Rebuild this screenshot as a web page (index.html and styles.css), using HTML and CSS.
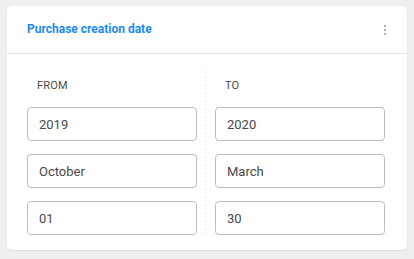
FILE: index.html
```html
<!DOCTYPE html>
<html>
<head>
<meta charset="utf-8">
<link rel="stylesheet" href="styles.css">
</head>
<body>
<div class="card">
  <div class="card-header">
    <span class="title">Purchase creation date</span>
    <span class="kebab"><i></i><i></i><i></i></span>
  </div>
  <div class="card-body">
    <div class="col col-from">
      <div class="label">FROM</div>
      <div class="field">2019</div>
      <div class="field">October</div>
      <div class="field">01</div>
    </div>
    <div class="col col-to">
      <div class="label">TO</div>
      <div class="field">2020</div>
      <div class="field">March</div>
      <div class="field">30</div>
    </div>
  </div>
</div>
</body>
</html>
```
FILE: styles.css
```css
* { box-sizing: border-box; }
html, body { margin: 0; }
body {
  background: #efefef;
  padding: 6px 7px;
  font-family: Roboto, "Liberation Sans", sans-serif;
  width: 414px;
  height: 259px;
}
.card {
  width: 400px;
  height: 244px;
  background: #fff;
  border-radius: 5px;
  box-shadow: 0 1px 2px rgba(0,0,0,0.08);
  display: flex;
  flex-direction: column;
}
.card-header {
  height: 48px;
  border-bottom: 1px solid #e2e2e2;
  display: flex;
  align-items: center;
  justify-content: space-between;
  padding: 0 20px 0 20px;
}
.title {
  color: #1a8af5;
  font-weight: 700;
  font-size: 12px;
  margin-top: -1px;
}
.kebab {
  display: flex;
  flex-direction: column;
  gap: 2px;
  margin-right: 1px;
  margin-top: 1px;
}
.kebab i {
  display: block;
  width: 2px;
  height: 2px;
  background: #b0b0b0;
}
.card-body {
  display: flex;
  padding: 14px 0 0 20px;
}
.col {
  display: flex;
  flex-direction: column;
  gap: 13px;
  padding-top: 10px;
}
.col-from {
  width: 179px;
  padding-right: 9px;
  background-image: linear-gradient(#dcdcdc 1px, transparent 1px);
  background-size: 1px 4px;
  background-repeat: repeat-y;
  background-position: right top;
}
.col-to {
  padding-left: 9px;
}
.label {
  height: 16px;
  line-height: 16px;
  font-size: 11px;
  color: #4a4a4a;
  padding-left: 10px;
  letter-spacing: 0.2px;
}
.field {
  width: 170px;
  height: 34px;
  border: 1px solid #bdbdbd;
  border-radius: 4px;
  padding-left: 11px;
  display: flex;
  align-items: center;
  font-size: 13px;
  color: #4a4a4a;
}
```
